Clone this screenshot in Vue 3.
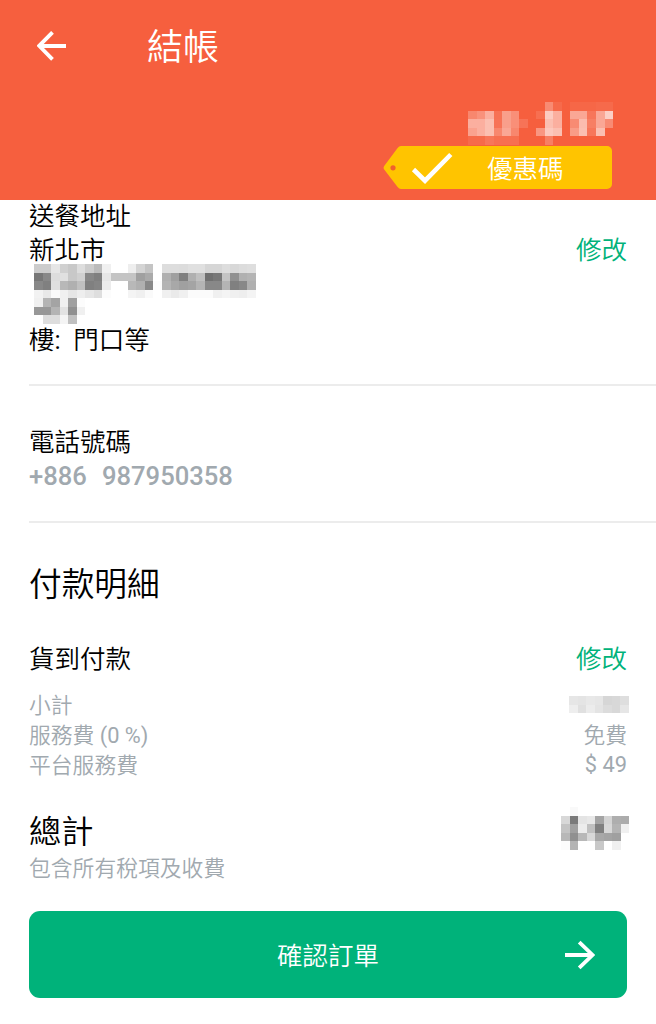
<script setup>
import { h } from 'vue'

const CELL = 8.533

// Pixelated placeholder: each row holds one value per cell.
const Mosaic = ({ rows, light }) => {
  const cells = []
  rows.forEach((row, y) => {
    row.split(' ').forEach((v, x) => {
      if (v === '--') return
      cells.push(h('rect', {
        x: x * CELL,
        y: y * CELL,
        width: CELL,
        height: CELL,
        fill: light ? '#fff' : `#${v}${v}${v}`,
        'fill-opacity': light ? Number(v) / 100 : 1
      }))
    })
  })
  const w = Math.max(...rows.map(r => r.split(' ').length)) * CELL
  return h('svg', { width: w, height: rows.length * CELL, 'shape-rendering': 'crispEdges', 'aria-hidden': 'true' }, cells)
}
Mosaic.props = { rows: Array, light: Boolean }

const price = [
  '-- -- -- -- -- -- -- -- -- 28 07 -- 05 05 05 07 07',
  '25 32 50 12 40 30 -- -- 10 68 50 -- 45 45 15 45 70',
  '50 50 60 13 40 30 13 -- -- 60 50 -- 28 58 20 45 28',
  '42 50 60 25 45 25 -- -- 35 66 60 -- 38 60 15 60 --',
  '07 07 15 10 10 10 -- -- -- 20 -- -- -- -- -- -- --'
]
const address = [
  'cc cc e6 d0 c8 dd cc bb f0 -- -- ee d4 c4 -- dd dd dc e0 e0 d6 d6 dd d8 dc de',
  '77 88 dd e0 c8 d0 88 80 e6 c4 c4 c4 a0 aa -- b0 a0 80 b0 c0 70 78 c4 90 b0 b4',
  '88 80 e0 b8 b0 c0 80 85 ec -- -- b8 b0 88 fc b4 a8 a0 a4 b4 88 88 b4 80 88 b0',
  'f2 e8 fa f0 e6 ee e6 de fc -- -- f4 f0 fa -- f0 ea f0 fb fb fb f0 f4 f0 ee f4',
  'f0 b4 a4 f0 a0 fc',
  '98 98 b4 e2 90 f0',
  '-- dd dd f4 c0 --'
]
const subtotal = ['e6 e4 e8 e6 d6 d8 de', 'ee e0 ec e4 dc d8 e6']
const total = [
  '-- f9 -- -- -- -- -- --',
  'd8 7a e4 e8 a4 d4 ae ac',
  'c4 a0 ec c0 80 d8 b4 f0',
  'b8 90 b8 d8 a8 a4 a0 --',
  'fc b4 -- -- c8 -- f0 --'
]
</script>

<template>
  <main class="page">
    <header class="header">
      <div class="nav">
        <svg class="back" width="30" height="30" viewBox="0 0 30 30">
          <path d="M29 15H3M15.5 1.3 2.2 14.8 15.5 28.3" />
        </svg>
        <h1>結帳</h1>
      </div>
      <Mosaic class="price" :rows="price" light />
      <div class="coupon">
        <svg class="tag" width="230" height="45" viewBox="0 0 230 45">
          <path fill="#ffc400" d="M18 1h206a5 5 0 0 1 5 5v33a5 5 0 0 1-5 5H18q-2 0-3.4-2L1.2 24.5q-1.2-1.8 0-3.6L14.6 3Q16 1 18 1Z" />
          <circle cx="10" cy="22.8" r="2.6" fill="#f0602c" />
          <path d="m30.5 24.5 11.5 11.2L67.8 9.5" fill="none" stroke="#fff" stroke-width="4.6" />
        </svg>
        <span>優惠碼</span>
      </div>
    </header>

    <section class="address">
      <div class="line l1">送餐地址</div>
      <div class="line l2"><span>新北市</span><a>修改</a></div>
      <Mosaic class="hidden-address" :rows="address" />
      <div class="line l3">樓<span class="latin">:&nbsp; </span>門口等</div>
    </section>

    <section class="phone">
      <div class="line">電話號碼</div>
      <div class="number">+886&nbsp; 987950358</div>
    </section>

    <section class="payment">
      <h2>付款明細</h2>
      <div class="line method"><span>貨到付款</span><a>修改</a></div>
      <div class="fee"><span>小計</span><Mosaic class="subtotal" :rows="subtotal" /></div>
      <div class="fee"><span>服務費 <span class="latin">(0 %)</span></span><span>免費</span></div>
      <div class="fee"><span>平台服務費</span><span class="latin platform">$ 49</span></div>
      <div class="total"><span>總計</span><Mosaic class="amount" :rows="total" /></div>
      <div class="fee note">包含所有稅項及收費</div>
    </section>

    <button class="confirm">
      <span>確認訂單</span>
      <svg width="30" height="30" viewBox="0 0 30 30">
        <path d="M0 15H27M14.2 2.2 27.5 15 14.2 27.8" />
      </svg>
    </button>
  </main>
</template>

<style>
body { margin: 0; background: #fff; }
</style>

<style scoped>
.page {
  width: 656px;
  height: 1024px;
  overflow: hidden;
  background: #fff;
  color: #000;
  font-family: Roboto, "Noto Sans CJK TC", sans-serif;
  font-weight: 350;
  font-size: 25.5px;
}
svg { display: block; flex: none; }
.header {
  height: 200px;
  background: #f65f3e;
  color: #fff;
  display: flex;
  flex-direction: column;
  align-items: flex-end;
}
.nav {
  align-self: stretch;
  height: 92px;
  padding-left: 37px;
  display: flex;
  align-items: center;
}
.nav svg path, .confirm svg path { fill: none; stroke: #fff; stroke-width: 3.8; }
h1 { margin: 4px 0 0 80px; font-size: 36px; line-height: 50px; font-weight: 350; }
.price { margin: 10px 43px 0 0; }
.coupon {
  display: grid;
  width: 230px;
  height: 45px;
  margin: 0.33px 43px 0 0;
}
.coupon > * { grid-area: 1 / 1; }
.coupon span { padding-left: 104px; line-height: 48px; }
.line { height: 34px; line-height: 34px; display: flex; justify-content: space-between; white-space: pre; }
a { color: #00b27a; }
.address {
  height: 185px;
  margin-left: 29px;
  padding-right: 29px;
  border-bottom: 2px solid #ececec;
}
.address .l1 { margin-top: -1px; }
.hidden-address { margin: -3px 0 0 5px; }
.l3 { margin-top: -1.2px; justify-content: flex-start; }
.phone { height: 135px; margin-left: 29px; border-bottom: 2px solid #ececec; }
.phone .line { padding-top: 38.5px; }
.number { height: 34px; line-height: 34px; font-weight: 500; font-size: 25.6px; word-spacing: 1.2px; color: #a1a9af; white-space: pre; }
.payment { padding: 0 29px; height: 388px; }
h2 { margin: 0; padding-top: 37px; font-weight: 350; font-size: 32.7px; line-height: 50px; }
.method { margin-top: 32px; height: 46px; }
.fee {
  height: 30px;
  display: flex;
  align-items: center;
  justify-content: space-between;
  font-size: 21.8px;
  color: #a1a9af;
}
.latin { font-weight: 400; }
.platform { padding-top: 2px; }
.subtotal { margin: 4px -2px 0 0; }
.total { height: 50px; margin-top: 26px; display: flex; justify-content: space-between; align-items: center; font-size: 32.2px; }
.amount { margin: -1px -2px 0 0; }
.note { margin-top: -3px; }
.confirm {
  width: 598px;
  height: 87px;
  margin: 0 29px;
  padding: 0 32px 0 62px;
  border: 0;
  border-radius: 11px;
  background: #00b27a;
  color: #fff;
  font: inherit;
  display: flex;
  align-items: center;
}
.confirm span { flex: 1; text-align: center; padding-bottom: 2px; }
</style>
